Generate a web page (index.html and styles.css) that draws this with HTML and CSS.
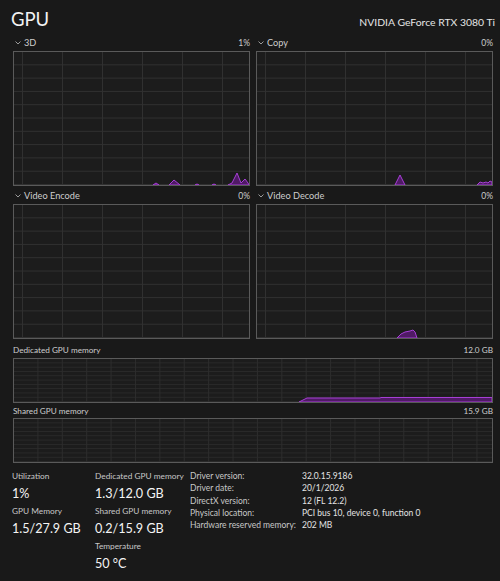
FILE: index.html
```html
<!DOCTYPE html>
<html lang="en">
<head>
<meta charset="utf-8">
<title>GPU</title>
<link rel="stylesheet" href="styles.css">
</head>
<body>
<div class="page">
  <header class="header">
    <h1 class="title">GPU</h1>
    <div class="model">NVIDIA GeForce RTX 3080 Ti</div>
  </header>

  <section class="engines">
    <div class="engine">
      <div class="chart-head">
        <span class="engine-name"><svg class="chev" width="6" height="4" viewBox="0 0 6 4"><polyline points="0.5,0.5 3,3 5.5,0.5"/></svg>3D</span>
        <span class="pct">1%</span>
      </div>
      <div class="chart">
        <svg class="plot" viewBox="0 0 235 133" preserveAspectRatio="none">
          <polygon class="area" points="139,133 142,131 145,133"/>
          <polygon class="area" points="155,133 160,128 166,133"/>
          <polygon class="area" points="181,133 183,132 185,133"/>
          <polygon class="area" points="198,133 200,132 202,133"/>
          <polygon class="area" points="214,133 218,131 223,121 227,131 231,127 234,131 235,133"/>
        </svg>
      </div>
    </div>
    <div class="engine">
      <div class="chart-head">
        <span class="engine-name"><svg class="chev" width="6" height="4" viewBox="0 0 6 4"><polyline points="0.5,0.5 3,3 5.5,0.5"/></svg>Copy</span>
        <span class="pct">0%</span>
      </div>
      <div class="chart">
        <svg class="plot" viewBox="0 0 235 133" preserveAspectRatio="none">
          <polygon class="area" points="138,133 143,123 148,133"/>
          <polygon class="area" points="220,133 223,130 226,131 229,130 231,131 233,129 235,130 235,133"/>
        </svg>
      </div>
    </div>
    <div class="engine">
      <div class="chart-head">
        <span class="engine-name"><svg class="chev" width="6" height="4" viewBox="0 0 6 4"><polyline points="0.5,0.5 3,3 5.5,0.5"/></svg>Video Encode</span>
        <span class="pct">0%</span>
      </div>
      <div class="chart">
        <svg class="plot" viewBox="0 0 235 133" preserveAspectRatio="none"></svg>
      </div>
    </div>
    <div class="engine">
      <div class="chart-head">
        <span class="engine-name"><svg class="chev" width="6" height="4" viewBox="0 0 6 4"><polyline points="0.5,0.5 3,3 5.5,0.5"/></svg>Video Decode</span>
        <span class="pct">0%</span>
      </div>
      <div class="chart">
        <svg class="plot" viewBox="0 0 235 133" preserveAspectRatio="none">
          <polygon class="area" points="140,133 144,129 148,127 153,126 156,125 158,127 160,133"/>
        </svg>
      </div>
    </div>
  </section>

  <section class="memory">
    <div class="mem-head first">
      <span>Dedicated GPU memory</span>
      <span>12.0 GB</span>
    </div>
    <div class="chart mem-chart">
      <svg class="plot" viewBox="0 0 478 43" preserveAspectRatio="none">
        <polygon class="area" points="285,43 293,39 366,39 367,38.5 478,38.5 478,43"/>
      </svg>
    </div>
    <div class="mem-head">
      <span>Shared GPU memory</span>
      <span>15.9 GB</span>
    </div>
    <div class="chart mem-chart">
      <svg class="plot" viewBox="0 0 478 43" preserveAspectRatio="none"></svg>
    </div>
  </section>

  <section class="stats">
    <div class="stat-col col-a">
      <div class="stat-label">Utilization</div>
      <div class="stat-value">1%</div>
      <div class="stat-label">GPU Memory</div>
      <div class="stat-value">1.5/27.9 GB</div>
    </div>
    <div class="stat-col col-b">
      <div class="stat-label">Dedicated GPU memory</div>
      <div class="stat-value">1.3/12.0 GB</div>
      <div class="stat-label">Shared GPU memory</div>
      <div class="stat-value">0.2/15.9 GB</div>
      <div class="stat-label">Temperature</div>
      <div class="stat-value">50 °C</div>
    </div>
    <dl class="details">
      <dt>Driver version:</dt><dd>32.0.15.9186</dd>
      <dt>Driver date:</dt><dd>20/1/2026</dd>
      <dt>DirectX version:</dt><dd>12 (FL 12.2)</dd>
      <dt>Physical location:</dt><dd>PCI bus 10, device 0, function 0</dd>
      <dt>Hardware reserved memory:</dt><dd>202 MB</dd>
    </dl>
  </section>
</div>
</body>
</html>
```

FILE: styles.css
```css
* { box-sizing: border-box; }
html, body { margin: 0; padding: 0; }
body {
  background: #191919;
  color: #ffffff;
  font-family: Lato, "Noto Sans", sans-serif;
  width: 500px;
  height: 581px;
  overflow: hidden;
  white-space: nowrap;
}
.page { padding: 0 7px 0 13px; }

.header {
  height: 33px;
  display: flex;
  justify-content: space-between;
  align-items: baseline;
  padding-top: 5px;
}
.title {
  margin: 0 0 0 -2px;
  font-size: 18.5px;
  font-weight: 400;
  line-height: 28px;
  color: #f2f2f2;
}
.model {
  margin-right: -2px;
  font-size: 10.4px;
  color: #e6e6e6;
}

.engines {
  display: grid;
  grid-template-columns: 1fr 1fr;
  column-gap: 6px;
}
.chart-head {
  height: 18px;
  display: flex;
  justify-content: space-between;
  align-items: flex-end;
  padding-bottom: 1px;
  font-size: 9.2px;
  line-height: 14px;
  color: #cdcdcd;
}
.pct { font-size: 8.5px; }
.engine-name { display: flex; align-items: center; }
.chev {
  margin: 0 3px 0 2px;
  fill: none;
  stroke: #9a9a9a;
  stroke-width: 1;
}

.chart {
  height: 135px;
  border: 1px solid #5a5a5a;
  background-color: #1c1c1c;
  background-image:
    linear-gradient(90deg, #303030 1px, transparent 1px),
    linear-gradient(0deg, #303030 1px, transparent 1px);
  background-size: 40px 100%, 100% 13.3px;
  background-position: 8px 0, 0 0;
}
.plot { display: block; width: 100%; height: 100%; }
.area {
  fill: #501a66;
  stroke: #a63fd6;
  stroke-width: 1;
  stroke-linejoin: round;
}

.mem-head {
  height: 15px;
  display: flex;
  justify-content: space-between;
  align-items: flex-end;
  font-size: 8.2px;
  line-height: 14px;
  color: #cdcdcd;
}
.mem-head.first { height: 19px; padding-bottom: 1px; }
.mem-chart {
  height: 45px;
  background-image:
    linear-gradient(270deg, #2c2c2c 1px, transparent 1px),
    linear-gradient(0deg, #2a2a2a 1px, transparent 1px);
  background-size: 24.4px 100%, 100% 4.3px;
  background-position: 0 0, 0 0;
}

.stats {
  display: flex;
  align-items: flex-start;
  padding-top: 6px;
  margin-left: -1px;
}
.stat-col { display: flex; flex-direction: column; }
.col-a { width: 83px; }
.col-b { width: 95px; }
.stat-label {
  font-size: 8.3px;
  line-height: 14px;
  color: #c8c8c8;
}
.stat-value {
  font-size: 12.6px;
  line-height: 21px;
  color: #f4f4f4;
}
.details {
  margin: 0;
  padding-top: 1px;
  display: grid;
  grid-template-columns: 112px auto;
  align-content: start;
  font-size: 8.5px;
  line-height: 12.3px;
  color: #c8c8c8;
}
.details dt { margin: 0; }
.details dd { margin: 0; color: #e4e4e4; }
```
